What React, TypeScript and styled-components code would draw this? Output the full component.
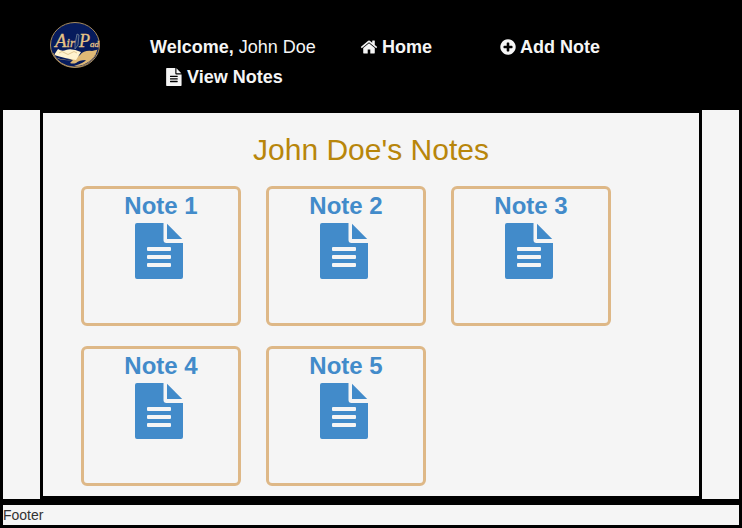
import React from "react";
import styled, { createGlobalStyle } from "styled-components";

const GlobalStyle = createGlobalStyle`
  *, *::before, *::after { box-sizing: border-box; }
  body {
    margin: 0;
    background: #000;
    color: #333;
    font-family: "Liberation Sans", Arial, sans-serif;
    font-size: 14px;
    line-height: 20px;
  }
`;

const Page = styled.div`
  padding: 0 3px 3px;
`;

const Header = styled.header`
  display: flex;
  align-items: flex-start;
  min-height: 110px;
  padding: 22px 47px 0;
  color: #f5f5f5;
`;

const HomeLink = styled.a`
  display: block;
  flex: none;
  width: 50px;
  height: 46px;
  margin-right: 50px;
`;

const Nav = styled.nav`
  display: grid;
  flex: 1;
  grid-template-columns: 210px 140px auto;
  padding-top: 10px;
  font-size: 18px;
  line-height: 30px;
  white-space: nowrap;
`;

const NavLink = styled.a<{ $indent?: boolean }>`
  display: flex;
  align-items: center;
  gap: 4px;
  padding-left: ${(p) => (p.$indent ? "16px" : "0")};
  color: #f5f5f5;
  font-weight: bold;
  text-decoration: none;
`;

const Body = styled.div`
  display: grid;
  grid-template-columns: 37px 1fr 37px;
`;

const Side = styled.aside`
  background: #f5f5f5;
`;

const Main = styled.main`
  padding: 20px 38px 10px;
  border: 3px solid #000;
  background: #f5f5f5;
`;

const Title = styled.h1`
  margin: 0 0 20px;
  color: #b8860b;
  font-size: 30px;
  font-weight: normal;
  line-height: 33px;
  text-align: center;
`;

const Notes = styled.div`
  display: grid;
  grid-template-columns: repeat(auto-fill, 160px);
  gap: 20px 25px;
`;

const NoteCard = styled.a`
  display: flex;
  flex-direction: column;
  align-items: center;
  height: 140px;
  border: 3px solid #deb887;
  border-radius: 6px;
  color: #428bca;
  font-size: 24px;
  font-weight: bold;
  line-height: 34px;
  text-decoration: none;
`;

const Footer = styled.footer`
  margin-top: 6px;
  background: #f5f5f5;
`;

const FileIcon = ({ width, height }: { width: number; height: number }) => (
  <svg width={width} height={height} viewBox="0 0 52 56" fill="currentColor" aria-hidden="true">
    <path
      fillRule="evenodd"
      d="M2 0H28.500V17a3 3 0 0 0 3 3H48V54a2 2 0 0 1-2 2H2a2 2 0 0 1-2-2V2a2 2 0 0 1 2-2zM13 24a1 1 0 0 0-1 1v2a1 1 0 0 0 1 1h22a1 1 0 0 0 1-1v-2a1 1 0 0 0-1-1zM13 32a1 1 0 0 0-1 1v2a1 1 0 0 0 1 1h22a1 1 0 0 0 1-1v-2a1 1 0 0 0-1-1zM13 40a1 1 0 0 0-1 1v2a1 1 0 0 0 1 1h22a1 1 0 0 0 1-1v-2a1 1 0 0 0-1-1z"
    />
    <path d="M32 .8L47.200 16H32z" />
  </svg>
);

const HomeIcon = () => (
  <svg width="18" height="18" viewBox="0 0 1792 1792" fill="currentColor" aria-hidden="true">
    <path d="M1472 992v480q0 26-19 45t-45 19h-384v-384h-256v384h-384q-26 0-45-19t-19-45v-480q0-1 .5-3t.5-3l575-474 575 474q1 2 1 6zm223-69l-62 74q-8 9-21 11h-3q-13 0-21-7l-692-577-692 577q-12 8-24 7-13-2-21-11l-62-74q-8-10-7-23.500t11-21.500l719-599q32-26 76-26t76 26l244 204v-195q0-14 9-23t23-9h192q14 0 23 9t9 23v408l219 182q10 8 11 21.500t-7 23.500z" />
  </svg>
);

const PlusIcon = () => (
  <svg width="16" height="18" viewBox="128 0 1536 1792" fill="currentColor" aria-hidden="true">
    <path d="M1344 960v-128q0-26-19-45t-45-19h-256v-256q0-26-19-45t-45-19h-128q-26 0-45 19t-19 45v256h-256q-26 0-45 19t-19 45v128q0 26 19 45t45 19h256v256q0 26 19 45t45 19h128q26 0 45-19t19-45v-256h256q26 0 45-19t19-45zm320-64q0 209-103 385.500t-279.500 279.500-385.500 103-385.500-103-279.500-279.500-103-385.500 103-385.500 279.500-279.500 385.500-103 385.500 103 279.500 279.500 103 385.500z" />
  </svg>
);

const Logo = () => (
  <svg width="50" height="46" viewBox="0 0 50 46" role="img" aria-label="Air Pad">
    <defs>
      <clipPath id="disc">
        <ellipse cx="25" cy="23" rx="23" ry="21" />
      </clipPath>
    </defs>
    <ellipse cx="25" cy="23" rx="24.500" ry="22.500" fill="#061b5c" stroke="#a58a5c" strokeWidth="1" />
    <g clipPath="url(#disc)">
      <path d="M0 33Q8 37 17 38Q24 38 30 33Q34 28 42 29L50 27V40Q40 47 24 44Q34 41 36 38Q29 38 26 41Q23 42 20 41L23 38Q9 39 0 33z" fill="#dfb976" />
      <path d="M8 27Q12 30 16 28Q22 26 31 30L26 38Q17 37 4 33z" fill="#fff3cf" />
      <path d="M9 31Q12 28 15 31T21 31T27 31" fill="none" stroke="#d5b679" strokeWidth=".7" />
    </g>
    <path d="M3 31A23 21 0 0 0 46 32" fill="none" stroke="#c49d60" strokeWidth=".8" />
    <path d="M25 27L25 22L27 12L29 13L28 23z" fill="#112c69" stroke="#8590a0" strokeWidth=".7" />
    <g
      fill="#e8c586"
      stroke="#e8c586"
      strokeWidth=".3"
      fontFamily="Liberation Serif, serif"
      fontStyle="italic"
      fontSize="12"
    >
      <text x="5" y="25">
        <tspan fontSize="19">A</tspan>ir
      </text>
      <text x="29" y="25">
        <tspan fontSize="18">P</tspan>
        <tspan fontSize="9">ad</tspan>
      </text>
    </g>
  </svg>
);

const notes = ["Note 1", "Note 2", "Note 3", "Note 4", "Note 5"];

export default function App() {
  return (
    <>
      <GlobalStyle />
      <Page>
        <Header>
          <HomeLink href="#home">
            <Logo />
          </HomeLink>
          <Nav>
            <span>
              <strong>Welcome,</strong> John Doe
            </span>
            <NavLink href="#home">
              <HomeIcon />
              Home
            </NavLink>
            <NavLink href="#add">
              <PlusIcon />
              Add Note
            </NavLink>
            <NavLink href="#notes" $indent>
              <FileIcon width={17} height={18} />
              View Notes
            </NavLink>
          </Nav>
        </Header>
        <Body>
          <Side />
          <Main>
            <Title>John Doe's Notes</Title>
            <Notes>
              {notes.map((note) => (
                <NoteCard key={note} href="#note">
                  {note}
                  <FileIcon width={52} height={56} />
                </NoteCard>
              ))}
            </Notes>
          </Main>
          <Side />
        </Body>
        <Footer>Footer</Footer>
      </Page>
    </>
  );
}
